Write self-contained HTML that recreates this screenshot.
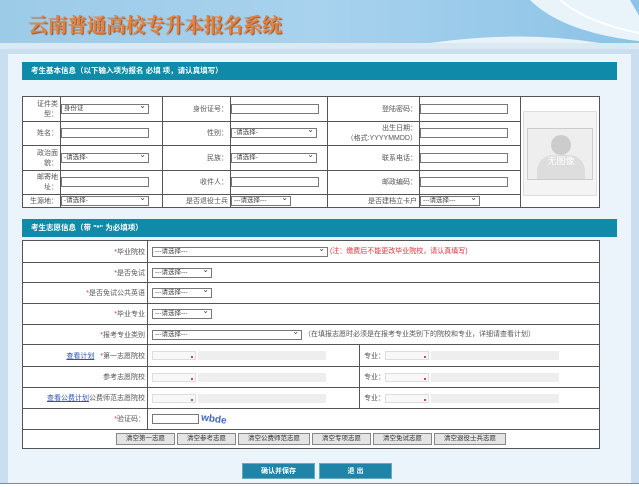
<!DOCTYPE html>
<html><head><meta charset="utf-8"><style>
*{margin:0;padding:0;box-sizing:border-box}
body{width:639px;height:487px;overflow:hidden;background:#c9dff0;font-family:"Liberation Sans","Noto Sans CJK SC",sans-serif;font-size:7px;color:#444;position:relative}
.abs{position:absolute}
#hdr{left:0;top:0;width:639px;height:43px;background:linear-gradient(90deg,#9ccbe8,#a8d2ee 50%,#8cc3e6)}
#title{left:28px;top:9px;font-family:"Noto Serif CJK SC","Liberation Serif",serif;font-weight:bold;font-size:20px;color:#e8803a;text-shadow:1px 1px 1px #a05020;letter-spacing:-0.5px;white-space:nowrap}
#strip{left:0;top:43px;width:639px;height:6px;background:#dbe9f3}
#panel{left:8px;top:54px;width:623px;height:430px;background:#eaf4fa}
.bar{left:22px;width:595px;background:#0f8aa8;color:#fff;font-weight:bold;font-size:7.5px;padding-left:9px}
table{position:absolute;border-collapse:collapse;background:#fff;table-layout:fixed}
td{border:1px solid #555;font-size:7px;color:#555;white-space:nowrap;overflow:hidden}
.r{text-align:right;padding-right:2px}
.in{display:inline-block;width:88px;height:10px;border:1px solid #777;background:#fff;vertical-align:middle}
.sel{display:inline-block;height:10px;border:1px solid #777;background:#fff;font-size:6.5px;line-height:8px;padding-left:2px;vertical-align:middle;position:relative;color:#444}
.sel:after{content:"⌄";position:absolute;right:2px;top:-3px;font-size:8px}
.red{color:#e0303a}
.g{display:inline-block;height:9px;background:#eee;vertical-align:middle}
.sm{display:inline-block;width:44px;height:9px;border:1px solid #ddd;background:#f8f8f8;vertical-align:middle;position:relative}
.sm:after{content:"";position:absolute;right:2px;bottom:1px;width:2px;height:2px;background:#d44}
a{color:#2a55b0;text-decoration:underline}
.b{display:inline-block;height:12px;border:1px solid #888;background:#e4e4e4;font-size:6.5px;line-height:10px;padding:0 9px;margin:0 1px;color:#333}
.bb{top:463px;width:73px;height:16px;background:#1f84a8;color:#fff;font-weight:bold;font-size:7px;text-align:center;line-height:16px;border:1px solid #6ab}
</style></head><body>
<div id="hdr" class="abs"></div>
<svg class="abs" style="left:400px;top:0" width="239" height="43"><path d="M30 43 Q120 30 200 43Z" fill="#e9f2f9"/><path d="M130 0 Q160 30 230 40 L255 43 L230 0Z" fill="#f2f8fc" opacity=".9"/><path d="M160 0 Q190 25 250 35" stroke="#fff" fill="none" stroke-width="2"/></svg>
<div id="title" class="abs">云南普通高校专升本报名系统</div>
<div id="strip" class="abs"></div>
<div id="panel" class="abs"></div>
<div class="abs bar" style="top:62px;height:18px;line-height:18px">考生基本信息（以下输入项为报名 必填 项，请认真填写）</div>
<table style="left:22px;top:96px;width:577px;height:112px">
<colgroup><col style="width:38px"><col style="width:102px"><col style="width:68px"><col style="width:97px"><col style="width:92px"><col style="width:101px"><col style="width:79px"></colgroup>
<tr><td class="r">证件类<br>型：</td><td><span class="sel" style="width:88px">身份证</span></td><td class="r">身份证号：</td><td><span class="in"></span></td><td class="r">登陆密码：</td><td><span class="in"></span></td><td rowspan="5" style="position:relative"><div class="abs" style="left:2px;top:14px;width:74px;height:85px;border:1px solid #ddd;background:#f4f4f4"><div class="abs" style="left:3px;top:16px;width:66px;height:52px;border:1px solid #ccc;background:#eee;overflow:hidden"><div class="abs" style="left:23px;top:6px;width:20px;height:20px;border-radius:50%;background:#ccc"></div><div class="abs" style="left:9px;top:26px;width:48px;height:30px;border-radius:16px 16px 0 0;background:#ddd;color:#fff;font-size:9px;text-align:center;line-height:12px">无图像</div></div></div></td></tr>
<tr><td class="r">姓名：</td><td><span class="in"></span></td><td class="r">性别：</td><td><span class="sel" style="width:86px">-请选择-</span></td><td class="r">出生日期：<br>（格式:YYYYMMDD）</td><td><span class="in"></span></td></tr>
<tr><td class="r">政治面<br>貌：</td><td><span class="sel" style="width:88px">-请选择-</span></td><td class="r">民族：</td><td><span class="sel" style="width:86px">-请选择-</span></td><td class="r">联系电话：</td><td><span class="in"></span></td></tr>
<tr><td class="r">邮寄地<br>址：</td><td><span class="in"></span></td><td class="r">收件人：</td><td><span class="in"></span></td><td class="r">邮政编码：</td><td><span class="in"></span></td></tr>
<tr><td class="r">生源地：</td><td><span class="sel" style="width:88px">-请选择-</span></td><td class="r">是否退役士兵</td><td><span class="sel" style="width:60px">---请选择---</span></td><td class="r">是否建档立卡户</td><td><span class="sel" style="width:60px">---请选择---</span></td></tr>
</table>
<div class="abs bar" style="top:219px;height:18px;line-height:18px">考生志愿信息（带 "*" 为必填项）</div>
<table style="left:22px;top:240px;width:577px;height:208px">
<colgroup><col style="width:125px"><col style="width:212px"><col style="width:240px"></colgroup>
<tr style="height:22px"><td class="r"><span class="red">*</span>毕业院校</td><td colspan="2" style="padding-left:4px"><span class="sel" style="width:176px">---请选择---</span> <span class="red">(注：缴费后不能更改毕业院校，请认真填写)</span></td></tr>
<tr style="height:20px"><td class="r"><span class="red">*</span>是否免试</td><td colspan="2" style="padding-left:4px"><span class="sel" style="width:60px">---请选择---</span></td></tr>
<tr style="height:21px"><td class="r"><span class="red">*</span>是否免试公共英语</td><td colspan="2" style="padding-left:4px"><span class="sel" style="width:60px">---请选择---</span></td></tr>
<tr style="height:21px"><td class="r"><span class="red">*</span>毕业专业</td><td colspan="2" style="padding-left:4px"><span class="sel" style="width:60px">---请选择---</span></td></tr>
<tr style="height:20px"><td class="r"><span class="red">*</span>报考专业类别</td><td colspan="2" style="padding-left:4px"><span class="sel" style="width:150px">---请选择---</span> （在填报志愿时必须是在报考专业类别下的院校和专业，详细请查看计划）</td></tr>
<tr style="height:22px"><td class="r"><a>查看计划</a> &nbsp; <span class="red">*</span>第一志愿院校</td><td style="padding-left:4px"><span class="sm"></span> <span class="g" style="width:128px"></span></td><td style="padding-left:4px">专业：<span class="sm"></span> <span class="g" style="width:128px"></span></td></tr>
<tr style="height:21px"><td class="r">参考志愿院校</td><td style="padding-left:4px"><span class="sm"></span> <span class="g" style="width:128px"></span></td><td style="padding-left:4px">专业：<span class="sm"></span> <span class="g" style="width:128px"></span></td></tr>
<tr style="height:21px"><td class="r"><a>查看公费计划</a>公费师范志愿院校</td><td style="padding-left:4px"><span class="sm"></span> <span class="g" style="width:128px"></span></td><td style="padding-left:4px">专业：<span class="sm"></span> <span class="g" style="width:128px"></span></td></tr>
<tr style="height:21px"><td class="r"><span class="red">*</span>验证码：</td><td colspan="2" style="padding-left:4px"><span class="in" style="width:47px"></span> <span style="color:#4466bb;font-weight:bold;font-size:10px;vertical-align:top;display:inline-block;transform:rotate(8deg)">wbde</span></td></tr>
<tr style="height:19px"><td colspan="3" style="text-align:center"><span class="b">清空第一志愿</span><span class="b">清空参考志愿</span><span class="b">清空公费师范志愿</span><span class="b">清空专项志愿</span><span class="b">清空免试志愿</span><span class="b">清空退役士兵志愿</span></td></tr>
</table>
<div class="abs bb" style="left:242px">确认并保存</div>
<div class="abs bb" style="left:319px">退 出</div>
<div class="abs" style="left:0;top:483px;width:639px;height:1px;background:#888"></div>
<div class="abs" style="left:0;top:484px;width:639px;height:3px;background:#fff"></div>
</body></html>
